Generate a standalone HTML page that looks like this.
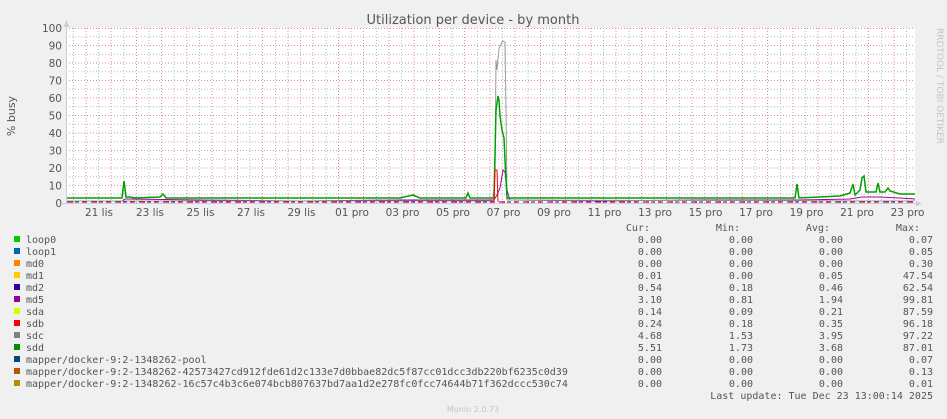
<!DOCTYPE html>
<html><head><meta charset="utf-8"><style>
html,body{margin:0;padding:0;background:#f0f0f0;width:947px;height:419px;overflow:hidden}
svg{display:block}
.m{font-family:"DejaVu Sans Mono","Liberation Mono",monospace;font-size:10px;fill:#555}
.s{font-family:"DejaVu Sans","Liberation Sans",sans-serif;fill:#555}
</style></head><body>
<svg width="947" height="419" xmlns="http://www.w3.org/2000/svg">
<rect width="947" height="419" fill="#f0f0f0"/>
<text x="473" y="24" text-anchor="middle" class="s" font-size="13">Utilization per device - by month</text>
<text x="937" y="28" class="s" font-size="9" transform="rotate(90 937 28)" style="fill:#c4c4c4">RRDTOOL / TOBI OETIKER</text>
<text x="15" y="116" class="s" font-size="11" transform="rotate(-90 15 116)" text-anchor="middle">% busy</text>
<rect x="66" y="28" width="849" height="175" fill="#fff"/>
<g stroke="#b8b8b8" stroke-width="1" stroke-dasharray="1,2">
<line x1="66" x2="915" y1="194.25" y2="194.25"/><line x1="66" x2="915" y1="176.75" y2="176.75"/><line x1="66" x2="915" y1="159.25" y2="159.25"/><line x1="66" x2="915" y1="141.75" y2="141.75"/><line x1="66" x2="915" y1="124.25" y2="124.25"/><line x1="66" x2="915" y1="106.75" y2="106.75"/><line x1="66" x2="915" y1="89.25" y2="89.25"/><line x1="66" x2="915" y1="71.75" y2="71.75"/><line x1="66" x2="915" y1="54.25" y2="54.25"/><line x1="66" x2="915" y1="36.75" y2="36.75"/>
<line y1="28" y2="203" x1="73.5" x2="73.5"/><line y1="28" y2="203" x1="98.5" x2="98.5"/><line y1="28" y2="203" x1="124" x2="124"/><line y1="28" y2="203" x1="149" x2="149"/><line y1="28" y2="203" x1="174" x2="174"/><line y1="28" y2="203" x1="199.5" x2="199.5"/><line y1="28" y2="203" x1="225" x2="225"/><line y1="28" y2="203" x1="250" x2="250"/><line y1="28" y2="203" x1="275.5" x2="275.5"/><line y1="28" y2="203" x1="300.5" x2="300.5"/><line y1="28" y2="203" x1="326" x2="326"/><line y1="28" y2="203" x1="351" x2="351"/><line y1="28" y2="203" x1="376.5" x2="376.5"/><line y1="28" y2="203" x1="401.5" x2="401.5"/><line y1="28" y2="203" x1="427" x2="427"/><line y1="28" y2="203" x1="452" x2="452"/><line y1="28" y2="203" x1="477.5" x2="477.5"/><line y1="28" y2="203" x1="502.5" x2="502.5"/><line y1="28" y2="203" x1="528" x2="528"/><line y1="28" y2="203" x1="553" x2="553"/><line y1="28" y2="203" x1="578.5" x2="578.5"/><line y1="28" y2="203" x1="603.5" x2="603.5"/><line y1="28" y2="203" x1="629" x2="629"/><line y1="28" y2="203" x1="654" x2="654"/><line y1="28" y2="203" x1="679.5" x2="679.5"/><line y1="28" y2="203" x1="704.5" x2="704.5"/><line y1="28" y2="203" x1="730" x2="730"/><line y1="28" y2="203" x1="755" x2="755"/><line y1="28" y2="203" x1="780.5" x2="780.5"/><line y1="28" y2="203" x1="805.5" x2="805.5"/><line y1="28" y2="203" x1="831" x2="831"/><line y1="28" y2="203" x1="856" x2="856"/><line y1="28" y2="203" x1="881.5" x2="881.5"/><line y1="28" y2="203" x1="906.5" x2="906.5"/>
</g>
<g stroke="#e09090" stroke-width="1" stroke-dasharray="1,2">
<line x1="66" x2="915" y1="185.5" y2="185.5"/><line x1="66" x2="915" y1="168" y2="168"/><line x1="66" x2="915" y1="150.5" y2="150.5"/><line x1="66" x2="915" y1="133" y2="133"/><line x1="66" x2="915" y1="115.5" y2="115.5"/><line x1="66" x2="915" y1="98" y2="98"/><line x1="66" x2="915" y1="80.5" y2="80.5"/><line x1="66" x2="915" y1="63" y2="63"/><line x1="66" x2="915" y1="45.5" y2="45.5"/><line x1="66" x2="915" y1="28.5" y2="28.5"/>
<line y1="28" y2="203" x1="86" x2="86"/><line y1="28" y2="203" x1="111" x2="111"/><line y1="28" y2="203" x1="136.5" x2="136.5"/><line y1="28" y2="203" x1="161.5" x2="161.5"/><line y1="28" y2="203" x1="187" x2="187"/><line y1="28" y2="203" x1="212" x2="212"/><line y1="28" y2="203" x1="237.5" x2="237.5"/><line y1="28" y2="203" x1="262.5" x2="262.5"/><line y1="28" y2="203" x1="288" x2="288"/><line y1="28" y2="203" x1="313" x2="313"/><line y1="28" y2="203" x1="338.5" x2="338.5"/><line y1="28" y2="203" x1="363.5" x2="363.5"/><line y1="28" y2="203" x1="389" x2="389"/><line y1="28" y2="203" x1="414" x2="414"/><line y1="28" y2="203" x1="439.5" x2="439.5"/><line y1="28" y2="203" x1="464.5" x2="464.5"/><line y1="28" y2="203" x1="490" x2="490"/><line y1="28" y2="203" x1="515" x2="515"/><line y1="28" y2="203" x1="540.5" x2="540.5"/><line y1="28" y2="203" x1="565.5" x2="565.5"/><line y1="28" y2="203" x1="591" x2="591"/><line y1="28" y2="203" x1="616" x2="616"/><line y1="28" y2="203" x1="641.5" x2="641.5"/><line y1="28" y2="203" x1="666.5" x2="666.5"/><line y1="28" y2="203" x1="692" x2="692"/><line y1="28" y2="203" x1="717" x2="717"/><line y1="28" y2="203" x1="742.5" x2="742.5"/><line y1="28" y2="203" x1="767.5" x2="767.5"/><line y1="28" y2="203" x1="793" x2="793"/><line y1="28" y2="203" x1="818" x2="818"/><line y1="28" y2="203" x1="843.5" x2="843.5"/><line y1="28" y2="203" x1="868.5" x2="868.5"/><line y1="28" y2="203" x1="894" x2="894"/>
</g>
<line x1="66.5" y1="22" x2="66.5" y2="204" stroke="#ccd" />
<polygon points="63.5,27 66.5,20 69.5,27" fill="#ccd"/>
<line x1="62" y1="203.5" x2="918" y2="203.5" stroke="#ccd"/>
<polygon points="916,200.5 922,203.5 916,206.5" fill="#ccd"/>
<g fill="none" stroke-width="1">
<polyline stroke="#a000a0" points="67,201 122,201 125,199 200,200 300,201 400,200 494,200 497,195 500,188 503,170 505,172 507,190 510,200 600,201 700,200 800,200 850,199 862,197 880,197 900,198 915,199"/>
<polyline stroke="#3000a0" stroke-dasharray="4,4" points="67,202 915,202"/>
<polyline stroke="#999" points="67,201 493,201 495,175 496,60 497,70 499,48 501,44 503,41 505,42 506,110 507,200 915,201"/>
<polyline stroke="#00a000" stroke-width="1.5" points="67,198 122,198 124,181 126,197 130,197 135,198 160,197 163,194 166,198 200,198 300,198 400,198 413,195 420,198 466,198 468,193 470,198 494,198 496,110 498,96 499,100 500,116 502,130 504,138 505,160 507,198 600,198 700,198 795,198 797,184 799,198 840,196 850,193 853,184 855,195 860,190 862,178 864,176 866,192 876,192 878,183 880,192 885,192 888,188 890,191 900,194 915,194"/>
<polyline stroke="#ff0000" stroke-width="1.5" stroke-dasharray="3,9" points="70,202 915,202"/>
<polyline stroke="#ff0000" points="494,202 495,170 497,170 498,202"/>
</g>
<g class="s" font-size="10.5" text-anchor="end">
<text x="62" y="207">0</text><text x="62" y="189.5">10</text><text x="62" y="172">20</text><text x="62" y="154.5">30</text><text x="62" y="137">40</text><text x="62" y="119.5">50</text><text x="62" y="102">60</text><text x="62" y="84.5">70</text><text x="62" y="67">80</text><text x="62" y="49.5">90</text><text x="62" y="32">100</text>
</g>
<g class="s" font-size="10.5" text-anchor="middle">
<text x="99" y="216">21 lis</text><text x="150" y="216">23 lis</text><text x="200.5" y="216">25 lis</text><text x="251" y="216">27 lis</text><text x="301.5" y="216">29 lis</text><text x="352" y="216">01 pro</text><text x="402.5" y="216">03 pro</text><text x="453" y="216">05 pro</text><text x="503.5" y="216">07 pro</text><text x="554" y="216">09 pro</text><text x="604.5" y="216">11 pro</text><text x="655" y="216">13 pro</text><text x="705.5" y="216">15 pro</text><text x="756" y="216">17 pro</text><text x="806.5" y="216">19 pro</text><text x="857" y="216">21 pro</text><text x="907.5" y="216">23 pro</text>
</g>
<g>
<rect x="14" y="236" width="6" height="6" fill="#00cc00"/>
<rect x="14" y="248" width="6" height="6" fill="#0066b3"/>
<rect x="14" y="260" width="6" height="6" fill="#ff8000"/>
<rect x="14" y="272" width="6" height="6" fill="#ffcc00"/>
<rect x="14" y="284" width="6" height="6" fill="#330099"/>
<rect x="14" y="296" width="6" height="6" fill="#990099"/>
<rect x="14" y="308" width="6" height="6" fill="#ccff00"/>
<rect x="14" y="320" width="6" height="6" fill="#ff0000"/>
<rect x="14" y="332" width="6" height="6" fill="#808080"/>
<rect x="14" y="344" width="6" height="6" fill="#008f00"/>
<rect x="14" y="356" width="6" height="6" fill="#00487d"/>
<rect x="14" y="368" width="6" height="6" fill="#b35a00"/>
<rect x="14" y="380" width="6" height="6" fill="#b38f00"/>
</g>
<g class="m">
<text x="26" y="243">loop0</text><text x="26" y="255">loop1</text><text x="26" y="267">md0</text><text x="26" y="279">md1</text><text x="26" y="291">md2</text><text x="26" y="303">md5</text><text x="26" y="315">sda</text><text x="26" y="327">sdb</text><text x="26" y="339">sdc</text><text x="26" y="351">sdd</text><text x="26" y="363">mapper/docker-9:2-1348262-pool</text><text x="26" y="375">mapper/docker-9:2-1348262-42573427cd912fde61d2c133e7d0bbae82dc5f87cc01dcc3db220bf6235c0d39</text><text x="26" y="387">mapper/docker-9:2-1348262-16c57c4b3c6e074bcb807637bd7aa1d2e278fc0fcc74644b71f362dccc530c74</text>
</g>
<g class="m" text-anchor="end">
<text x="650" y="231">Cur:</text><text x="740" y="231">Min:</text><text x="830" y="231">Avg:</text><text x="920" y="231">Max:</text>
<text x="662" y="243">0.00</text><text x="753" y="243">0.00</text><text x="843" y="243">0.00</text><text x="933" y="243">0.07</text>
<text x="662" y="255">0.00</text><text x="753" y="255">0.00</text><text x="843" y="255">0.00</text><text x="933" y="255">0.05</text>
<text x="662" y="267">0.00</text><text x="753" y="267">0.00</text><text x="843" y="267">0.00</text><text x="933" y="267">0.30</text>
<text x="662" y="279">0.01</text><text x="753" y="279">0.00</text><text x="843" y="279">0.05</text><text x="933" y="279">47.54</text>
<text x="662" y="291">0.54</text><text x="753" y="291">0.18</text><text x="843" y="291">0.46</text><text x="933" y="291">62.54</text>
<text x="662" y="303">3.10</text><text x="753" y="303">0.81</text><text x="843" y="303">1.94</text><text x="933" y="303">99.81</text>
<text x="662" y="315">0.14</text><text x="753" y="315">0.09</text><text x="843" y="315">0.21</text><text x="933" y="315">87.59</text>
<text x="662" y="327">0.24</text><text x="753" y="327">0.18</text><text x="843" y="327">0.35</text><text x="933" y="327">96.18</text>
<text x="662" y="339">4.68</text><text x="753" y="339">1.53</text><text x="843" y="339">3.95</text><text x="933" y="339">97.22</text>
<text x="662" y="351">5.51</text><text x="753" y="351">1.73</text><text x="843" y="351">3.68</text><text x="933" y="351">87.01</text>
<text x="662" y="363">0.00</text><text x="753" y="363">0.00</text><text x="843" y="363">0.00</text><text x="933" y="363">0.07</text>
<text x="662" y="375">0.00</text><text x="753" y="375">0.00</text><text x="843" y="375">0.00</text><text x="933" y="375">0.13</text>
<text x="662" y="387">0.00</text><text x="753" y="387">0.00</text><text x="843" y="387">0.00</text><text x="933" y="387">0.01</text>
<text x="933" y="399">Last update: Tue Dec 23 13:00:14 2025</text>
</g>
<text x="473" y="412" text-anchor="middle" class="s" font-size="8" style="fill:#c4c4c4">Munin 2.0.73</text>
</svg>
</body></html>
